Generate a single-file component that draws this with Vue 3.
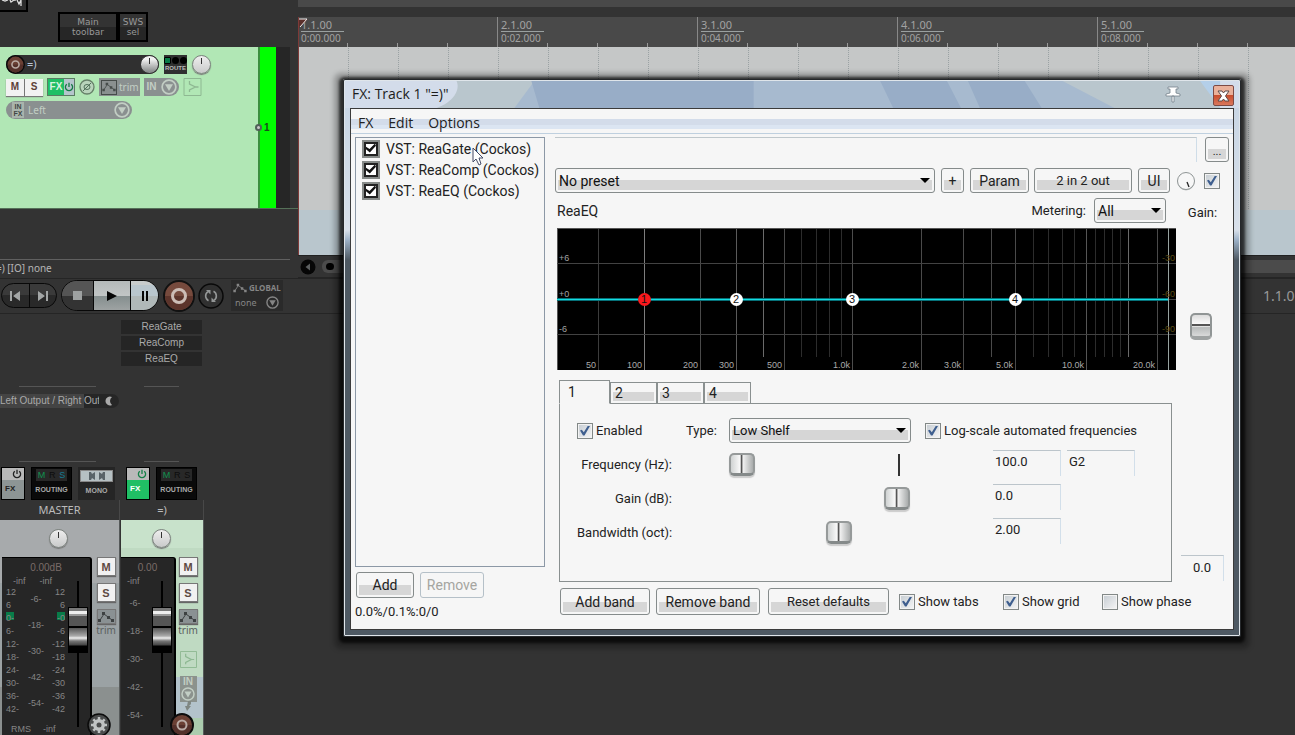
<script setup>
import { ref } from 'vue'

const measures = ref([
  { bar: '1.1.00', time: '0:00.000' },
  { bar: '2.1.00', time: '0:02.000' },
  { bar: '3.1.00', time: '0:04.000' },
  { bar: '4.1.00', time: '0:06.000' },
  { bar: '5.1.00', time: '0:08.000' },
])
const effects = ref([
  { name: 'VST: ReaGate (Cockos)', on: true },
  { name: 'VST: ReaComp (Cockos)', on: true },
  { name: 'VST: ReaEQ (Cockos)', on: true },
])
const inserts = ['ReaGate', 'ReaComp', 'ReaEQ']
const leftScale = ['12', '6', '0-', '6-', '12-', '18-', '24-', '30-', '36-', '42-']
const rightScale = ['12', '6', '-0', '-6', '-12', '-18', '-24', '-30', '-36', '-42']
const midScale = ['-6-', '-18-', '-30-', '-42-', '-54-']

const gridLines = [
  { x: 41, c: '#3c3c3c', t: '50' }, { x: 87, c: '#7d7d7d', t: '100' }, { x: 143, c: '#4a4a4a', t: '200' },
  { x: 179, c: '#5a5a5a', t: '300' }, { x: 206, c: '#6a6a6a', s: true }, { x: 227, c: '#4a4a4a', t: '500' },
  { x: 244, c: '#2c2c2c', s: true }, { x: 259, c: '#2c2c2c', s: true }, { x: 272, c: '#2c2c2c', s: true },
  { x: 284, c: '#2c2c2c', s: true }, { x: 295, c: '#4c4c4c', t: '1.0k' }, { x: 364, c: '#4a4a4a', t: '2.0k' },
  { x: 406, c: '#4a4a4a', t: '3.0k' }, { x: 434, c: '#4a4a4a', s: true }, { x: 458, c: '#4a4a4a', t: '5.0k' },
  { x: 476, c: '#2c2c2c', s: true }, { x: 491, c: '#2c2c2c', s: true }, { x: 505, c: '#2c2c2c', s: true },
  { x: 517, c: '#2c2c2c', s: true }, { x: 529, c: '#555', t: '10.0k' }, { x: 538, c: '#2c2c2c', s: true },
  { x: 547, c: '#2c2c2c', s: true }, { x: 555, c: '#2c2c2c', s: true }, { x: 563, c: '#2c2c2c', s: true },
  { x: 571, c: '#6a6a6a', s: true }, { x: 600, c: '#4a4a4a', t: '20.0k' },
]
const levels = [
  { y: 35, l: '+6', r: '-30' },
  { y: 71, l: '+0', r: '-60' },
  { y: 106, l: '-6', r: '-90' },
]
const nodes = [{ x: 87, n: 1 }, { x: 179, n: 2 }, { x: 295, n: 3 }, { x: 458, n: 4 }]
const active = ref(1)
const bands = [
  { id: 'freq', label: 'Frequency (Hz):', pos: 0, value: '100.0', note: 'G2' },
  { id: 'gain', label: 'Gain (dB):', pos: 67, value: '0.0' },
  { id: 'bw', label: 'Bandwidth (oct):', pos: 42, value: '2.00' },
]
const enabled = ref(true)
const logScale = ref(true)
const chainOn = ref(true)
const view = ref([
  { id: 'v-tabs', label: 'Show tabs', on: true },
  { id: 'v-grid', label: 'Show grid', on: true },
  { id: 'v-phase', label: 'Show phase', on: false },
])
</script>

<template>
  <div class="daw">
    <svg class="defs" aria-hidden="true">
      <symbol id="env" viewBox="0 0 16 12">
        <path d="M2 9L6 3L10 6L14 9" fill="none" stroke="currentColor" stroke-width="1" />
        <path d="M0 8h3v3H0zM4 1h3v3H4zM9 5h3v3H9zM13 8h3v3h-3z" fill="currentColor" />
      </symbol>
      <symbol id="drop" viewBox="0 0 14 14">
        <circle cx="7" cy="7" r="6" fill="none" stroke="currentColor" stroke-width="1.5" />
        <path d="M3.5 4.5h7L7 10.5z" fill="currentColor" />
      </symbol>
      <symbol id="power" viewBox="0 0 10 10">
        <path d="M2.8 2.2A3.6 3.6 0 1 0 7.2 2.2M5 .8V5" fill="none" stroke="currentColor" stroke-width="1.3" />
      </symbol>
      <symbol id="inputfx" viewBox="0 0 18 18">
        <path d="M.5.5h17v17H.5z" fill="none" stroke="currentColor" />
        <path d="M6 3v3l6 3l-6 3v2M12 9h3" fill="none" stroke="currentColor" stroke-width="1.3" />
      </symbol>
      <symbol id="rec" viewBox="0 0 24 24">
        <circle cx="12" cy="12" r="11" fill="#6b4034" stroke="#0c0c0c" stroke-width="2" />
        <path d="M2 12a10 10 0 0 0 20 0z" fill="#54302a" />
        <circle cx="12" cy="12" r="4.5" fill="none" stroke="#b9aaa4" stroke-width="2" />
      </symbol>
    </svg>

    <section class="upper">
      <aside class="tcp">
        <header class="toolbars">
          <svg class="logo" viewBox="0 0 28 12"><path d="M-1-1h28v12H-1z" fill="#2b2b2b" stroke="#000" stroke-width="2" /><path d="M2 0l3 1l3-1M10 0l1 2l3-2M15 0v1M17 0l2 4l2-4M21 0v6" fill="none" stroke="#ddd" stroke-width="1.3" /></svg>
          <div class="tools">
            <button class="tool wide">Main<br>toolbar</button>
            <button class="tool">SWS<br>sel</button>
          </div>
        </header>
        <div class="track">
          <div class="controls">
            <div class="line">
              <div class="namebar">
                <button class="icon" aria-label="Record arm"><svg width="19" height="19"><use href="#rec" /></svg></button>
                <input class="tname" aria-label="Track name" value="=)">
                <span class="knob"></span>
              </div>
              <button class="route"><span class="leds"><i class="g"></i><i></i><i></i></span>ROUTE</button>
              <span class="knob pale"></span>
            </div>
            <div class="line second">
              <div class="ms"><button>M</button><button>S</button></div>
              <button class="fxb"><b>FX</b><span><svg width="10" height="10"><use href="#power" /></svg></span></button>
              <button class="icon phase" aria-label="Phase"><svg width="16" height="16" viewBox="0 0 16 16"><circle cx="8" cy="8" r="7" fill="#b8d3bb" stroke="#668069" stroke-width="1.3" /><ellipse cx="8" cy="8" rx="3" ry="2.5" fill="none" stroke="#50705a" /><path d="M4 12l8-8" stroke="#50705a" /></svg></button>
              <button class="chip trim"><span class="box"><svg width="14" height="10"><use href="#env" /></svg></span>trim</button>
              <button class="chip in">IN<svg width="16" height="16"><use href="#drop" /></svg></button>
              <button class="icon ghost" aria-label="Input"><svg width="19" height="18"><use href="#inputfx" /></svg></button>
            </div>
            <button class="chip left"><span class="infx">IN<br>FX</span><span class="grow">Left</span><svg width="16" height="16"><use href="#drop" /></svg></button>
          </div>
          <div class="meterbar"><span class="dot"></span>1</div>
          <div class="gutter"></div>
        </div>
        <div class="status">=) [IO] none</div>
      </aside>

      <main class="arrange">
        <div class="strip"></div>
        <div class="ruler">
          <div v-for="m in measures" :key="m.bar" class="measure">
            <span class="bar">{{ m.bar }}</span><span class="time">{{ m.time }}</span>
          </div>
          <svg class="playhead" width="9" height="10" viewBox="0 0 9 10"><path d="M0 1h9L0 10z" fill="#5a2f2b" /><path d="M0 1h8L1 9" fill="none" stroke="#eee" stroke-width="1" /></svg>
        </div>
        <div class="lanes"><div class="lane"></div></div>
        <div class="scroll">
          <button class="sarrow" aria-label="Scroll left"><svg width="16" height="16" viewBox="0 0 16 16"><circle cx="8" cy="8" r="7.5" fill="#060606" /><path d="M10 4.5v7L5.5 8z" fill="#5c5f60" /></svg></button>
          <div class="thumb"><i></i></div>
        </div>
      </main>
    </section>

    <section class="transport">
      <div class="pill small">
        <button aria-label="Go to start"><svg width="12" height="10" viewBox="0 0 12 10"><path d="M1 0h2v10H1zM11 0v10L4 5z" fill="#a3a6a6" /></svg></button>
        <button aria-label="Go to end"><svg width="12" height="10" viewBox="0 0 12 10"><path d="M9 0h2v10H9zM1 0v10l7-5z" fill="#a3a6a6" /></svg></button>
      </div>
      <div class="pill big">
        <button class="stop" aria-label="Stop"><svg width="9" height="9" viewBox="0 0 9 9"><path d="M0 0h9v9H0z" fill="#9ea1a1" /></svg></button>
        <button class="play" aria-label="Play"><svg width="10" height="10" viewBox="0 0 10 10"><path d="M0 0v10l10-5z" fill="#050505" /></svg></button>
        <button class="pause" aria-label="Pause"><svg width="8" height="10" viewBox="0 0 8 10"><path d="M1 0h2v10H1zM5 0h2v10H5z" fill="#050505" /></svg></button>
      </div>
      <button class="icon" aria-label="Record"><svg width="32" height="32" viewBox="0 0 32 32"><circle cx="16" cy="16" r="15" fill="#764a3d" stroke="#111" stroke-width="2" /><path d="M2 16a14 14 0 0 0 28 0z" fill="#5c342b" /><circle cx="16" cy="16" r="6.5" fill="none" stroke="#ccbdb6" stroke-width="3" /></svg></button>
      <button class="icon" aria-label="Repeat"><svg width="26" height="26" viewBox="0 0 26 26"><circle cx="13" cy="13" r="12" fill="#303030" stroke="#090909" stroke-width="1.5" /><path d="M10.500 17.700A5.300 5.300 0 0 1 10 8.600M15.500 8.300A5.300 5.300 0 0 1 16 17.400" fill="none" stroke="#949797" stroke-width="1.600" /><path d="M8 7h4.500v4.500zM18 19h-4.500v-4.500z" fill="#949797" /></svg></button>
      <div class="global">
        <span><svg width="14" height="10"><use href="#env" /></svg><b>GLOBAL</b></span>
        <button>none<svg width="13" height="13"><use href="#drop" /></svg></button>
      </div>
      <div class="position">1.1.00</div>
    </section>

    <section class="mixer">
      <article class="channel master">
        <div class="slots"></div>
        <button class="out"><span>Left Output / Right Output</span><svg width="10" height="10" viewBox="0 0 10 10"><path d="M7 1a4.500 4.500 0 1 0 0 8A5 5 0 0 1 7 1z" fill="#aaa" /></svg></button>
        <div class="sends"></div>
        <div class="tiles">
          <button class="tile fx"><span><svg width="10" height="10"><use href="#power" /></svg></span><b>FX</b></button>
          <button class="tile routing"><span><i class="m">M</i><i>R</i><i class="s">S</i></span><b>ROUTING</b></button>
          <button class="tile mono"><span><svg width="18" height="10" viewBox="0 0 18 10"><path d="M1 1h2l1 2l3-2v8L4 7L3 9H1zM17 1h-2l-1 2l-3-2v8l3-2l1 2h2z" fill="#596368" /></svg></span><b>MONO</b></button>
        </div>
        <h2>MASTER</h2>
        <div class="desk">
          <div class="pan"><span class="knob pale"></span></div>
          <div class="faders">
            <div class="meter">
              <div class="db">0.00dB</div>
              <div class="inf"><span>-inf</span><span>-inf</span></div>
              <div class="scales">
                <ol><li v-for="s in leftScale" :key="s" :class="{ zero: s === '0-' }">{{ s }}</li></ol>
                <ol class="mid"><li v-for="s in midScale" :key="s">{{ s }}</li></ol>
                <ol class="r"><li v-for="s in rightScale" :key="s" :class="{ zero: s === '-0' }">{{ s }}</li></ol>
                <input class="fader" type="range" min="0" max="100" value="74" aria-label="Master volume">
              </div>
              <div class="rms"><span>RMS</span><span>-inf</span></div>
            </div>
            <div class="side">
              <button class="sq">M</button><button class="sq">S</button>
              <button class="sq env"><svg width="16" height="12"><use href="#env" /></svg></button><small>trim</small>
            </div>
          </div>
          <button class="icon corner" aria-label="Settings"><svg width="24" height="24" viewBox="0 0 24 24"><circle cx="12" cy="12" r="11" fill="#4a4c4c" stroke="#0b0b0b" stroke-width="1.5" /><circle cx="12" cy="12" r="4.500" fill="none" stroke="#c0c3c3" stroke-width="3" /><path d="M12 4v16M4 12h16M6.300 6.300l11.400 11.400M17.700 6.300L6.300 17.700" stroke="#c0c3c3" stroke-width="2.500" /><circle cx="12" cy="12" r="2.500" fill="#4a4c4c" /></svg></button>
        </div>
      </article>

      <article class="channel child">
        <ul class="slots"><li v-for="i in inserts" :key="i">{{ i }}</li></ul>
        <div class="out none"></div>
        <div class="sends"></div>
        <div class="tiles">
          <button class="tile fx on"><span><svg width="10" height="10"><use href="#power" /></svg></span><b>FX</b></button>
          <button class="tile routing"><span><i class="m">M</i><i>R</i><i>S</i></span><b>ROUTING</b></button>
        </div>
        <h2>=)</h2>
        <div class="desk">
          <div class="pan"><span class="knob pale"></span></div>
          <div class="faders">
            <div class="meter">
              <div class="db">0.00</div>
              <div class="inf"><span>-inf</span></div>
              <div class="scales">
                <ol class="mid"><li v-for="s in midScale" :key="s">{{ s }}</li></ol>
                <input class="fader" type="range" min="0" max="100" value="74" aria-label="Track volume">
              </div>
            </div>
            <div class="side">
              <button class="sq">M</button><button class="sq">S</button>
              <button class="sq env"><svg width="16" height="12"><use href="#env" /></svg></button><small>trim</small>
              <button class="icon ghost" aria-label="Input effects"><svg width="17" height="17"><use href="#inputfx" /></svg></button>
              <button class="inbox">IN<svg width="14" height="14"><use href="#drop" /></svg><svg width="10" height="10" viewBox="0 0 10 10"><path d="M5 0h3v3L6 5h2L4 10L2 5h2z" fill="#7f8782" /></svg></button>
            </div>
          </div>
          <button class="icon corner" aria-label="Arm"><svg width="24" height="24"><use href="#rec" /></svg></button>
        </div>
      </article>
    </section>

    <section class="window">
      <svg class="glass" viewBox="0 0 897 28" preserveAspectRatio="none" aria-hidden="true">
        <path d="M0 0h897v28H0z" fill="#a7bacf" />
        <path d="M0 0h190l-20 28H0z" fill="#b9c6cd" />
        <path d="M0 0h112c4 10-4 22-20 28H0z" fill="#d3dcea" />
        <path d="M187 0h223v28H195zM537 0h67l14 28h-68zM625 0h57l17 28h-62z" fill="#98adc7" />
        <path d="M720 0h177v28H772z" fill="#b9c6cd" />
        <path d="M858 0h20v28z" fill="#b4cfe9" />
        <path d="M878 0h19v28h-19z" fill="#d3dcea" />
      </svg>
      <header class="title">
        <h1>FX: Track 1 "=)"</h1>
        <button class="icon pin" aria-label="Pin"><svg width="16" height="17" viewBox="0 0 16 17"><path d="M3 1h10v2h-2v4l4 1v2H1V8l4-1V3H3zM7 10h2v6H7z" fill="#fff" stroke="#75818a" stroke-width=".8" /></svg></button>
        <button class="close" aria-label="Close"><svg width="13" height="12" viewBox="0 0 13 12"><path d="M1 1h4l1.500 2L8 1h4L8.500 6L12 11H8L6.500 9L5 11H1l3.500-5z" fill="#fff" stroke="#5b4a4a" /></svg></button>
      </header>
      <div class="client">
        <nav class="menu"><a href="#fx">FX</a><a href="#edit">Edit</a><a href="#options">Options</a></nav>
        <div class="body">
          <div class="chain">
            <ul class="list">
              <li v-for="e in effects" :key="e.name"><label><input v-model="e.on" type="checkbox" class="bigcheck">{{ e.name }}</label></li>
            </ul>
            <div class="row g6"><button class="btn add">Add</button><button class="btn remove" disabled>Remove</button></div>
            <p>0.0%/0.1%:0/0</p>
          </div>
          <div class="panel">
            <div class="row top"><input class="comment" aria-label="Comment"><button class="btn dots">...</button></div>
            <div class="row preset">
              <span class="sel grow"><select aria-label="Preset"><option>No preset</option></select></span>
              <button class="btn plus">+</button><button class="btn param">Param</button><button class="btn pins">2 in 2 out</button><button class="btn ui">UI</button>
              <span class="wet"><svg width="20" height="20" viewBox="0 0 20 20"><circle cx="10" cy="11" r="8.500" fill="#bfc1c1" /><circle cx="10" cy="10" r="8.500" fill="#f7f7f7" stroke="#8f9595" /><path d="M11 11l2 5" stroke="#222" stroke-width="1.300" /></svg></span>
              <input v-model="chainOn" type="checkbox" class="check" aria-label="Enable effect">
            </div>
            <div class="plugin">
              <div class="eq">
                <div class="row head"><span class="grow">ReaEQ</span><label for="metering">Metering:</label><span class="sel meterSel"><select id="metering"><option>All</option></select></span></div>
                <svg class="graph" viewBox="0 0 619 142">
                  <path d="M0 0h619v142H0z" fill="#000" />
                  <path d="M0 .5h619M.5 0v142" stroke="#555" />
                  <path v-for="g in gridLines" :key="g.x" :d="`M${g.x + 0.5} 1V${g.s ? 129 : 142}`" :stroke="g.c" />
                  <path v-for="l in levels" :key="l.y" :d="`M0 ${l.y + 0.5}H619`" stroke="#424242" />
                  <path d="M611.500 0v142" stroke="#98a3a0" />
                  <g class="hz"><template v-for="g in gridLines" :key="g.x"><text v-if="g.t" :x="g.x - 2" y="140">{{ g.t }}</text></template></g>
                  <g v-for="l in levels" :key="l.l"><text class="lv" x="2" :y="l.y - 2">{{ l.l }}</text><text class="rv" x="618" :y="l.y - 2">{{ l.r }}</text></g>
                  <path d="M0 71.500H611" stroke="#067078" stroke-width="3" /><path d="M0 71.500H611" stroke="#13dce0" stroke-width="1" />
                  <g v-for="n in nodes" :key="n.n"><circle :cx="n.x + 0.5" cy="71.500" r="6.500" :fill="n.n === active ? '#f8181c' : '#fff'" /><text class="node" :x="n.x" y="75">{{ n.n }}</text></g>
                </svg>
                <div class="tabs"><button v-for="n in 4" :key="n" :class="{ active: n === active }" @click="active = n">{{ n }}</button></div>
                <div class="band">
                  <div class="row first">
                    <label class="en"><input v-model="enabled" type="checkbox" class="check">Enabled</label>
                    <label for="type" class="ty">Type:</label>
                    <span class="sel typeSel"><select id="type"><option>Low Shelf</option></select></span>
                    <label class="lg"><input v-model="logScale" type="checkbox" class="check">Log-scale automated frequencies</label>
                  </div>
                  <div v-for="b in bands" :key="b.id" class="params">
                    <label :for="b.id">{{ b.label }}</label>
                    <span class="track-h" :class="{ tick: b.note }"><input :id="b.id" class="hslider" type="range" min="0" max="100" :value="b.pos"></span>
                    <input class="val" :aria-label="b.label" :value="b.value">
                    <input v-if="b.note" class="val" aria-label="Note" :value="b.note">
                  </div>
                </div>
                <div class="row foot">
                  <button class="btn b1">Add band</button><button class="btn b2">Remove band</button><button class="btn b3">Reset defaults</button>
                  <label v-for="v in view" :key="v.id" :class="v.id"><input v-model="v.on" type="checkbox" class="check">{{ v.label }}</label>
                </div>
              </div>
              <div class="gaincol">
                <label for="outgain">Gain:</label>
                <input id="outgain" class="vslider" type="range" min="0" max="100" value="71">
                <input class="val gv" aria-label="Gain value" value="0.0">
              </div>
            </div>
          </div>
        </div>
      </div>
    </section>
    <svg class="cursor" width="13" height="19" viewBox="0 0 13 19" aria-hidden="true"><path d="M1 1v14l3-3l3 6l2-1l-2-6h4z" fill="#fff" stroke="#444b66" /></svg>
  </div>
</template>

<style>
html, body { margin: 0; background: #333; overflow: hidden; }
</style>

<style scoped>
* { box-sizing: border-box; }
button, input, select { font: inherit; color: inherit; margin: 0; padding: 0; border: 0; background: none; border-radius: 0; }
button { display: flex; align-items: center; justify-content: center; }
svg { flex: none; display: block; }
ul, ol, h1, h2, p { margin: 0; padding: 0; list-style: none; font-weight: normal; }
.daw { position: relative; height: 100vh; min-height: 735px; overflow: hidden; display: flex; flex-direction: column; background: #333; color: #a9a9a9; font: 10px/12px "Liberation Sans", Arial, sans-serif; }
.defs { position: absolute; width: 0; height: 0; }
.grow { flex: 1; text-align: left; }

.upper { display: flex; height: 278px; flex: none; }
.tcp { width: 298px; display: flex; flex-direction: column; }
.toolbars { height: 47px; display: flex; align-items: flex-start; }
.logo { width: 28px; height: 12px; }
.tools { display: flex; margin: 12px 0 0 30px; background: #000; padding: 2px; gap: 4px; height: 30px; }
.tool { width: 26px; color: #999; background: linear-gradient(#333 13px, #262626 13px); font: 9px/10px "DejaVu Sans", "Noto Sans", sans-serif; text-align: center; }
.tool.wide { width: 56px; }
.track { height: 162px; display: flex; border-bottom: 1px solid #557058; }
.controls { width: 258px; background: #b1e7b5; padding: 7px 6px; display: flex; flex-direction: column; align-items: flex-start; }
.line { display: flex; align-items: center; height: 20px; gap: 5px; }
.namebar { width: 153px; height: 19px; display: flex; align-items: center; border-radius: 10px; background: #303030; }
.tname { flex: 1; min-width: 0; color: #b9c4d6; padding-left: 2px; font: 11px/14px "Noto Sans", sans-serif; }
.knob { display: block; width: 19px; height: 19px; flex: none; border-radius: 50%; border: 1px solid #333; background: linear-gradient(#333, #333) center 2px / 1px 6px no-repeat, linear-gradient(#f0f0f0 20%, #8c8f8f 90%); }
.knob.pale { border-color: #7c827e; box-shadow: 0 1px 1px #777; background: linear-gradient(#333, #333) center 2px / 1px 6px no-repeat, linear-gradient(#eee, #c9caca); }
.route { width: 23px; height: 19px; flex-direction: column; background: #303030; color: #bbb; font: bold 6px/8px "Liberation Sans", sans-serif; }
.leds { display: flex; gap: 1px; }
.leds i { width: 7px; height: 7px; border-radius: 4px; background: #000; }
.leds i.g { background: #087b48; border: 1px solid #000; border-radius: 1px; }
.second { margin-top: 4px; height: 18px; gap: 4px; }
.ms { display: flex; gap: 1px; background: #777; box-shadow: 0 1px 1px #777; }
.ms button { width: 18px; height: 17px; background: #f2f2f2; color: #5e4038; font-weight: bold; }
.fxb { width: 28px; height: 18px; border: 1px solid #5b7b63; align-items: stretch; }
.fxb b { width: 16px; background: #20bf65; color: #d7f4e1; line-height: 16px; }
.fxb span { flex: 1; background: #b5c5cc; color: #137a43; display: flex; align-items: center; justify-content: center; }
.chip { height: 18px; background: #8a9090; color: #c2cec4; gap: 4px; border: 0; }
.trim { width: 41px; font: 10px/14px "Noto Sans", sans-serif; gap: 2px; justify-content: flex-start; padding-left: 2px; }
.box { width: 16px; height: 15px; border: 1px solid #464c4a; color: #464c4a; display: flex; align-items: center; justify-content: center; }
.in { width: 35px; border-radius: 0 9px 9px 0; font-weight: bold; }
.ghost { color: #8eb892; }
.left { margin-top: 5px; width: 126px; border-radius: 9px; padding: 0 2px 0 6px; font: 10px/14px "Noto Sans", sans-serif; }
.infx { width: 12px; height: 16px; background: #a9b4ac; color: #424744; font: bold 7px/7px "Liberation Sans", sans-serif; padding-top: 1px; }
.meterbar { width: 18px; background: #0f0; border-left: 2px solid #3c8f40; color: #174e19; font: bold 10px/161px "Liberation Sans", sans-serif; display: flex; }
.meterbar .dot { width: 7px; height: 7px; border-radius: 50%; border: 2px solid #51605a; background: #c8c8c8; margin: 77px 2px 0 -5px; }
.gutter { width: 14px; background: #262626; }
.status { margin: 50px 8px 0 0; border-top: 1px solid #606060; color: #b5b5b5; padding-top: 1px; font: 10px/14px "Noto Sans", sans-serif; text-indent: -4px; }

.arrange { flex: 1; display: flex; flex-direction: column; min-width: 0; }
.strip { height: 17px; background: #494949; border-bottom: 10px solid #333; }
.ruler { position: relative; height: 30px; display: flex; background: #494949; overflow: hidden; border-left: 1px solid #7d3a38; color: #a2a2a2; }
.playhead { position: absolute; left: 0; top: 1px; }
.measure { width: 200px; flex: none; padding-left: 3px; display: flex; flex-direction: column; align-items: flex-start; font: 11px/13px "Noto Sans", sans-serif; border-left: 1px solid #888; background: repeating-linear-gradient(90deg, transparent 0 49px, #999 49px 50px) 0 100% / 199px 4px no-repeat; }
.measure:first-child { margin-left: -2px; border-left-color: #6e3030; }
.bar { border-bottom: 1px solid #9aa0a0; height: 15px; width: 43px; padding-top: 1px; }
.time { font-size: 10px; line-height: 13px; }
.lanes { height: 208px; border-left: 1px solid #7d3a38; display: flex; flex-direction: column; background: repeating-linear-gradient(#c5c7c7 0 1px, transparent 1px 2px), repeating-linear-gradient(90deg, #c5c7c7 0 49px, #9aa2a4 49px 50px); }
.lane { margin-top: auto; height: 45px; background: #b9c6cd; }
.scroll { flex: 1; display: flex; align-items: center; padding-left: 2px; gap: 6px; border-top: 1px solid #222; border-bottom: 1px solid #252525; }
.thumb { flex: 1; height: 13px; border-radius: 6px 0 0 6px; background: #4b4b4b; padding: 3px 4px; }
.thumb i { display: block; width: 8px; height: 7px; border-radius: 4px; background: #000; }

.transport { height: 36px; flex: none; border-top: 1px solid #252525; border-bottom: 1px solid #252525; display: flex; align-items: center; gap: 4px; padding: 0 0 1px 1px; }
.pill { display: flex; border: 1px solid #080808; border-radius: 16px; overflow: hidden; background: linear-gradient(#3a3a3a 50%, #292929 50%); }
.pill button + button { border-left: 1px solid #080808; }
.small { height: 25px; width: 56px; }
.small button { flex: 1; }
.big { height: 31px; width: 98px; }
.big .stop { width: 31px; background: linear-gradient(#555 50%, #333 50%); }
.big .play { width: 37px; background: linear-gradient(#b4b9b9 0, #c1c5c5 50%, #838d8d 50%, #9ea3a3); }
.big .pause { flex: 1; background: linear-gradient(#c8cccc 15%, #b9c6cd 15% 50%, #b0b8b8 50%); }
.transport .icon + .icon { margin-left: -1px; }
.global { width: 52px; height: 31px; background: #2a2a2a; margin-left: 3px; color: #858585; display: flex; flex-direction: column; padding: 1px 2px; font: 9px/14px "Noto Sans", sans-serif; }
.global span { display: flex; align-items: center; gap: 2px; height: 14px; }
.global b { font-size: 8px; }
.global button { justify-content: space-between; flex: 1; padding: 0 2px; }
.position { margin-left: auto; width: 32px; font: 14px/20px "Noto Sans", sans-serif; white-space: nowrap; color: #999; }

.mixer { flex: 1; min-height: 0; display: flex; }
.channel { width: 120px; display: flex; flex-direction: column; }
.child { width: 83px; margin-left: 1px; }
.slots { height: 73px; padding-top: 6px; display: flex; flex-direction: column; gap: 2px; background: linear-gradient(90deg, transparent 19px, #555 19px 96px, transparent 96px) bottom / 100% 1px no-repeat; }
.child .slots { background: linear-gradient(#555, #555) 23px bottom / 35px 1px no-repeat; }
.slots li { height: 14px; width: 81px; background: #252525; text-align: center; line-height: 14px; color: #aaa; }
.out { height: 14px; width: 119px; margin-top: 7px; border-radius: 0 8px 8px 0; background: linear-gradient(90deg, #444 84px, #262626 84px); justify-content: space-between; padding-right: 4px; }
.out span { width: 99px; overflow: hidden; white-space: nowrap; text-align: left; }
.out.none { background: none; }
.sends { height: 54px; background: linear-gradient(#555, #555) 19px bottom / 77px 1px no-repeat; }
.child .sends { background: linear-gradient(#555, #555) 23px bottom / 35px 1px no-repeat; }
.tiles { margin-top: 5px; height: 33px; display: flex; gap: 6px; padding-left: 1px; }
.child .tiles { padding-left: 5px; }
.tile { flex-direction: column; align-items: stretch; justify-content: flex-start; border: 1px solid #000; width: 41px; background: #0a0a0a; font-size: 7px; line-height: 18px; color: #aaa; }
.tile span { height: 12px; display: flex; align-items: center; justify-content: space-around; background: #282828; margin: 1px 4px 0; line-height: 12px; }
.tile b { font-weight: bold; }
.tile i { font: 9px/12px "Liberation Sans", sans-serif; color: #0c0c0c; }
.tile .m { color: #119250; }
.tile .s { color: #157c94; }
.tile.fx { width: 24px; background: #8d9595; color: #222; text-align: left; }
.tile.fx span { background: #b9b9b9; margin: 0; justify-content: flex-end; padding-right: 2px; }
.tile.fx b { padding-left: 3px; font-size: 8px; }
.tile.fx.on { background: #20bf65; color: #fff; }
.tile.fx.on span { color: #148047; }
.tile.mono { width: 37px; background: #252525; border-color: #252525; }
.tile.mono span { background: #b6c0c3; margin: 2px 1px 0; height: 14px; border: 1px solid #888; }
h2 { height: 20px; text-align: center; font: 11px/20px "Noto Sans", sans-serif; color: #bbb; border-right: 1px solid #484848; }
.desk { position: relative; flex: 1; display: flex; flex-direction: column; border-right: 1px solid #565a5a; background: linear-gradient(#a7aaac 63px, #9ba2a4 63px 167px, #8b908f 167px); }
.child .desk { background: linear-gradient(#c8e2cb 28px, #bfdac2 28px 157px, #b3c3cb 157px 198px, #abccae 198px); }
.pan { height: 37px; display: flex; justify-content: center; padding: 9px 2px 0 0; }
.faders { flex: 1; display: flex; gap: 4px; }
.child .faders { gap: 2px; }
.meter { width: 90px; margin-left: 2px; background: #262626; border: solid #000; border-width: 1px 2px 0 0; border-radius: 0 3px 0 0; color: #858585; display: flex; flex-direction: column; }
.child .meter { width: 55px; margin-left: 0; }
.db { text-align: center; height: 15px; line-height: 20px; color: #7a6c68; }
.inf { display: flex; gap: 14px; padding-left: 11px; height: 13px; font-size: 9px; line-height: 16px; }
.child .inf { padding-left: 6px; }
.scales { height: 129px; display: flex; font: 9px/13px "Liberation Sans", sans-serif; }
.scales ol { width: 16px; margin-left: 4px; flex: none; }
.scales .zero { background: linear-gradient(#087c49, #087c49) left top / 8px 8px no-repeat; }
.scales .r { text-align: right; width: 16px; margin-left: 3px; }
.scales .r .zero { background-position: right top; }
.scales .mid { width: 20px; text-align: center; line-height: 26px; margin-left: 4px; }
.child .scales .mid { line-height: 28px; margin: 3px 0 0 4px; }
.fader { appearance: none; writing-mode: vertical-lr; direction: rtl; width: 20px; height: 146px; margin: -5px 2px 0 auto; flex: none; background: linear-gradient(#000, #000) center / 2px 100% no-repeat; }
.fader::-webkit-slider-thumb { appearance: none; width: 20px; height: 46px; border: 1px solid #000; background: linear-gradient(#777 0 3px, #eee 3px 6px, #999 6px 8px, #555 8px 18px, #000 18px 20px, #555 20px, #aaa 28px, #eee 30px, #777 33px, #444 37px, #000 38px); }
.rms { display: flex; gap: 12px; padding: 8px 0 0 9px; font-size: 9px; }
.side { width: 20px; display: flex; flex-direction: column; align-items: center; }
.sq { width: 19px; height: 19px; flex: none; margin-bottom: 7px; background: #f1f1f1; border: 1px solid #777; box-shadow: 0 1px 1px #666; color: #5e4a42; font: bold 11px/14px "Liberation Sans", sans-serif; }
.sq.env { height: 15px; margin: 0; color: #3d4142; background: #8a9193; }
.side small { font: 10px/12px "Noto Sans", sans-serif; color: #5a605f; }
.side .ghost { margin: 15px 0 8px; }
.inbox { flex-direction: column; width: 17px; color: #c2cec4; background: linear-gradient(#8b928d 26px, transparent 26px); font-weight: bold; line-height: 11px; }
.corner { position: absolute; left: 87px; bottom: -2px; }
.child .corner { left: 49px; }

.window { position: absolute; left: 343px; right: 54px; top: 79px; border: 1px solid #25282b; padding: 1px 6px 6px; border-radius: 2px; background: linear-gradient(#c6d4e3, #d8e0ea 150px, #9db2c8 160px, #4e5963 180px); box-shadow: inset 0 0 0 1px #dfe5ea, 0 2px 3px 4px rgba(0,0,0,.7), 0 3px 5px 9px rgba(0,0,0,.25); color: #222; font: 14px/16px Roboto, "Liberation Sans", sans-serif; }
.glass { position: absolute; left: 1px; top: 1px; width: calc(100% - 2px); height: 27px; }
.title { position: relative; height: 27px; display: flex; align-items: center; padding: 0 2px; }
h1 { flex: 1; font: 14px/20px "Open Sans", "Noto Sans", sans-serif; color: #1c1c1c; padding-bottom: 1px; }
.pin { margin-right: 32px; }
.close { width: 21px; height: 21px; margin-top: 2px; margin-right: -2px; border: 1px solid #7d4a44; background: linear-gradient(#eab09a 45%, #c84a2a 45%, #d9775c); border-radius: 2px; }
.client { position: relative; border: 1px solid #3b3b3b; background: #f6f6f6; }
.menu { height: 25px; display: flex; padding: 0 7px; gap: 15px; border-bottom: 1px solid #bfd0df; background: linear-gradient(transparent 10px, #d3dcea 10px 16px, #dbe5f2 16px 20px, transparent 20px); }
.menu a { font: 14px/28px "Open Sans", "Noto Sans", sans-serif; color: #222; text-decoration: none; }
.body { display: flex; gap: 10px; padding: 3px 4px 9px; }
.chain { width: 190px; flex: none; display: flex; flex-direction: column; }
.list { height: 430px; border: 1px solid #8c98a6; padding: 0 6px; }
.list li { height: 21px; white-space: nowrap; }
.list label { display: flex; align-items: center; gap: 6px; height: 21px; }
.bigcheck { appearance: none; width: 18px; height: 18px; border: 2px solid #878b89; background: #fff; box-shadow: inset 0 0 0 2px #222; flex: none; }
.bigcheck:checked::after { content: ""; display: block; width: 10px; height: 9px; margin: 2px; background: #111; clip-path: polygon(0 35%, 35% 60%, 90% 0, 100% 25%, 38% 100%, 0 65%); }
.row { display: flex; align-items: center; }
.g6 { gap: 6px; margin: 5px 0 6px 1px; }
.chain p { font-size: 13px; line-height: 16px; }
.btn { height: 25px; flex: none; border: 1px solid #858b8b; border-radius: 3px; box-shadow: inset 0 0 0 2px #f6f6f6; background: linear-gradient(#f6f6f6 50%, #d6d6d6 50%); color: #222; white-space: nowrap; }
.add { width: 58px; height: 26px; }
.remove { width: 64px; height: 26px; color: #a5a5a0; border-color: #b5c0c8; background: #f6f6f6; }
.panel { flex: 1; min-width: 0; }
.comment { flex: 1; height: 25px; border: solid #bfc7cb; border-width: 1px 1px 0 0; border-right-color: #cfdde8; min-width: 0; }
.dots { width: 24px; margin-left: 8px; font-size: 11px; padding-top: 4px; }
.preset { gap: 6px; margin-top: 6px; padding-right: 9px; }
.sel { position: relative; display: flex; height: 25px; }
.sel::after { content: ""; position: absolute; right: 5px; top: 10px; border: 5px solid transparent; border-top-color: #000; border-bottom: 0; pointer-events: none; }
select { appearance: none; width: 100%; padding-left: 3px; border: 1px solid #858b8b; border-radius: 3px; background: linear-gradient(#f6f6f6 50%, #d6d6d6 50%); box-shadow: inset 0 0 0 2px #f6f6f6; color: #111; }
.plus { width: 23px; }
.param { width: 59px; margin-right: -1px; }
.pins { width: 98px; font-size: 13px; }
.ui { width: 32px; }
.check { appearance: none; width: 16px; height: 16px; flex: none; border: 1px solid #828887; background: linear-gradient(135deg, #c5ccd2, #f6f6f6); box-shadow: inset 0 0 0 1px #f3f3f3; }
.check:checked::after { content: ""; display: block; width: 10px; height: 10px; margin: 2px; background: #3f5f8f; clip-path: polygon(0 50%, 18% 42%, 38% 68%, 80% 0, 100% 5%, 45% 100%, 30% 100%); }
.wet + .check { margin-left: 2px; }
.plugin { display: flex; margin-top: 5px; }
.eq { flex: 1; min-width: 0; }
.head { padding: 0 10px 0 2px; gap: 8px; height: 25px; }
.head label, .gaincol label { font-size: 13px; }
.meterSel { width: 72px; }
.graph { width: calc(100% - 2px); height: auto; margin: 5px 0 0 2px; font: 9px "Liberation Sans", sans-serif; }
.hz text { fill: #aaa; text-anchor: end; }
.lv { fill: #a2a2a2; }
.rv { fill: #5b4c13; text-anchor: end; }
.node { fill: #111; text-anchor: middle; font-size: 11px; }
.tabs { display: flex; align-items: flex-end; margin: 10px 0 -1px 4px; height: 24px; position: relative; }
.tabs button { width: 47px; height: 22px; border: 1px solid #8a9090; box-shadow: inset 0 0 0 2px #f6f6f6; background: linear-gradient(#f6f6f6 45%, #d6d6d6 45%); justify-content: flex-start; padding-left: 4px; }
.tabs button.active { width: 51px; height: 24px; background: #f6f6f6; border-bottom-color: #f6f6f6; padding-left: 8px; }
.band { margin: 0 4px; border: 1px solid #8a9090; padding: 14px 36px 38px 17px; display: flex; flex-direction: column; gap: 9px; }
.band .row { height: 25px; margin-bottom: -2px; }
.band label, .foot label { white-space: nowrap; flex: none; font-size: 13px; }
.typeSel select, .b3 { font-size: 13px; }
.en, .lg, .foot label { display: flex; align-items: center; gap: 3px; }
.en { width: 109px; }
.ty { width: 43px; }
.typeSel { width: 182px; flex: none; }
.lg { margin-left: 14px; }
.params { display: grid; grid-template-columns: 99px minmax(100px, 1fr) 68px 68px; column-gap: 6px; height: 25px; align-items: center; }
.params > label { text-align: right; padding: 4px 4px 0 0; }
.track-h { margin-left: 47px; height: 25px; display: flex; position: relative; }
.tick { background: linear-gradient(#333, #333) 66% 3px / 2px 22px no-repeat; }
.hslider { appearance: none; width: 100%; height: 27px; }
.hslider::-webkit-slider-thumb { appearance: none; width: 26px; height: 23px; border: 2px solid #969a9a; border-bottom: 3px solid #858a8a; border-radius: 5px; background: linear-gradient(90deg, #d0d3d3, #fafafa 42%, #555 46% 50%, #f2f2f2 54%, #a9acac); box-shadow: 0 2px 1px #ccc; }
.val { width: 100%; height: 26px; border: solid #bcc5cb; border-width: 1px 1px 0 0; border-right-color: #d2dfea; padding: 0 0 4px 2px; font-size: 13px; min-width: 0; color: #222; }
.foot { margin: 6px 0 0 5px; }
.b1 { width: 90px; margin-right: 6px; }
.b2 { width: 104px; margin-right: 8px; }
.b3 { width: 121px; margin-right: 10px; }
.foot .btn { height: 27px; }
.foot .v-tabs { width: 104px; }
.foot .v-grid { width: 99px; }
.foot .v-phase { width: 74px; }
.gaincol { width: 53px; flex: none; display: flex; flex-direction: column; align-items: center; padding-top: 7px; }
.vslider { appearance: none; writing-mode: vertical-lr; direction: rtl; width: 24px; height: 317px; margin: 8px 3px 9px 0; }
.vslider::-webkit-slider-thumb { appearance: none; width: 22px; height: 27px; border: 2px solid #909595; border-bottom: 4px solid #9fa3a3; border-radius: 5px; background: linear-gradient(#ddd, #fafafa 42%, #555 44% 50%, #f5f5f5 52%, #b9bcbc 60%, #d9dada); }
.gv { width: 43px; text-align: center; padding: 0 0 3px; }
.cursor { position: absolute; left: 472px; top: 147px; }
</style>
